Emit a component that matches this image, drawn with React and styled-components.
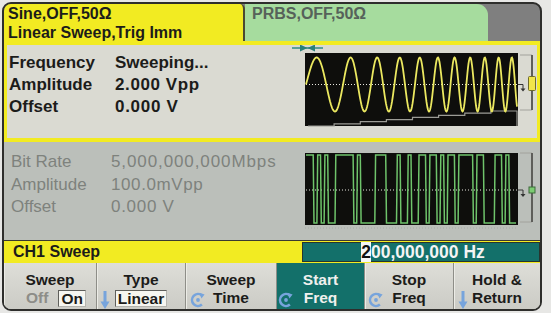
import React from "react";
import styled, { createGlobalStyle } from "styled-components";

const GlobalStyle = createGlobalStyle`
  html, body {
    margin: 0;
    padding: 0;
    background: #e7e7e5;
  }
  body {
    font-family: "Liberation Sans", Arial, sans-serif;
  }
`;

const YELLOW = "#f2eb22";
const TEAL = "#13706a";

const Page = styled.div`
  width: 551px;
  height: 313px;
  padding: 2px 0 0 2px;
  box-sizing: border-box;
`;

const Screen = styled.div`
  width: 540px;
  height: 309px;
  box-sizing: border-box;
  border: 2px solid #2e2e2c;
  border-radius: 9px;
  overflow: hidden;
  display: flex;
  flex-direction: column;
  background: #7f7f7f;
`;

const TabRow = styled.div`
  display: flex;
  height: 37px;
  flex: none;
`;

const Tab = styled.div`
  width: ${(p) => p.$w}px;
  box-sizing: border-box;
  padding: 1px 0 0 ${(p) => p.$pad}px;
  background: ${(p) => (p.$active ? YELLOW : "#a6dc9e")};
  color: ${(p) => (p.$active ? "#1c1c1a" : "#56625a")};
  border-right: ${(p) => (p.$active ? "2px solid #4a4a30" : "none")};
  border-top-right-radius: ${(p) => (p.$active ? 5 : 11)}px;
  font-size: 16px;
  font-weight: bold;
  line-height: 18.5px;
  white-space: nowrap;
`;

const Channel = styled.div`
  height: ${(p) => p.$h}px;
  flex: none;
  box-sizing: border-box;
  display: flex;
  background: ${(p) => (p.$active ? "#dadad2" : "#bbbfba")};
  border: ${(p) => (p.$active ? `solid ${YELLOW}` : "none")};
  border-width: 4px 3px 4px 3px;
`;

const Readout = styled.div`
  flex: 1;
  display: grid;
  grid-template-columns: ${(p) => p.$label}px auto;
  align-content: start;
  padding: ${(p) => p.$top}px 0 0 ${(p) => p.$left}px;
  font-size: 17px;
  line-height: ${(p) => p.$lh}px;
  font-weight: ${(p) => (p.$active ? 700 : 400)};
  color: ${(p) => (p.$active ? "#1c1c1a" : "#7e827d")};
  white-space: nowrap;
`;

const Value = styled.span`
  letter-spacing: ${(p) => p.$ls || 0}px;
`;

const Scope = styled.svg`
  flex: none;
  display: block;
`;

const StatusBar = styled.div`
  display: flex;
  height: 23px;
  flex: none;
  box-sizing: border-box;
  border-top: 1px solid #3a3a30;
  background: ${YELLOW};
`;

const StatusLabel = styled.div`
  width: 298px;
  flex: none;
  box-sizing: border-box;
  padding-left: 9px;
  font-size: 16px;
  font-weight: bold;
  line-height: 22px;
  color: #1c1c1a;
`;

const ValueBox = styled.div`
  flex: 1;
  margin: 1px 0;
  box-sizing: border-box;
  border: 1px solid #27352f;
  background: ${TEAL};
  color: #f4f4f4;
  padding-left: 4px;
  text-align: center;
  font-size: 17.5px;
  font-weight: bold;
  line-height: 18px;
`;

const Cursor = styled.span`
  background: #f6f6f6;
  color: #111;
`;

const Softkeys = styled.div`
  flex: 1;
  display: grid;
  grid-template-columns: 92px 89px 91px 88px 89px 1fr;
  background: #cfcfc9;
`;

const Key = styled.div`
  position: relative;
  box-sizing: border-box;
  padding-top: 8px;
  background: ${(p) =>
    p.$selected ? TEAL : "linear-gradient(#dedeD8, #cbcbc5)"};
  color: ${(p) => (p.$selected ? "#f0f0ee" : "#1c1c1a")};
  border-left: ${(p) => (p.$first ? "none" : "1px solid #8e8e88")};
  box-shadow: ${(p) => (p.$selected ? "none" : "inset 1px 0 0 #ececE6")};
  text-align: center;
  font-size: 15.5px;
  font-weight: bold;
  line-height: 18px;
`;

const KeyLine = styled.div`
  display: flex;
  justify-content: center;
  align-items: center;
  gap: 10px;
  height: 18px;
  padding-left: ${(p) => p.$shift || 0}px;
`;

const Dim = styled.span`
  color: #8d8d88;
`;

const Choice = styled.span`
  display: inline-block;
  padding: 0 2px;
  line-height: 15px;
  background: #f6f6f0;
  border: 1px solid #5f5f5b;
  border-right-color: #b4b4ae;
  border-bottom-color: #b4b4ae;
  color: #1c1c1a;
`;

const KeyIcon = styled.svg`
  position: absolute;
  left: ${(p) => p.$left}px;
  bottom: ${(p) => p.$bottom}px;
`;

const cycles = (t) => 0.022 * t + (0.00027 * t * t) / 2;

const sinePath = (() => {
  let d = "";
  for (let t = 0; t <= 211; t += 0.5) {
    const y = 39.5 - 27 * Math.sin(2 * Math.PI * cycles(t));
    d += `${t === 0 ? "M" : " L"}${(16 + t).toFixed(1)} ${y.toFixed(1)}`;
  }
  return d;
})();

const stairPath = (() => {
  const steps = 8;
  const w = (227 - 18) / steps;
  let d = "M18 81";
  for (let i = 0; i < steps; i++) {
    const y = 81 - (15 * i) / (steps - 1);
    d += ` L${(18 + i * w).toFixed(1)} ${y.toFixed(1)} L${(18 + (i + 1) * w).toFixed(1)} ${y.toFixed(1)}`;
  }
  return d + " L227 81";
})();

const prbsPath = (() => {
  let s = 0b1011001;
  const bits = [];
  for (let i = 0; i < 58; i++) {
    const b = ((s >> 6) ^ (s >> 5)) & 1;
    s = ((s << 1) | b) & 0x7f;
    bits.push(b);
  }
  const w = 210 / bits.length;
  const lvl = (b) => (b ? 13 : 81);
  let d = `M16 ${lvl(bits[0])}`;
  bits.forEach((b, i) => {
    const x = 16 + i * w;
    if (i > 0 && b !== bits[i - 1]) d += ` L${(x + 0.8).toFixed(1)} ${lvl(b)}`;
    d += ` L${(x + w).toFixed(1)} ${lvl(b)}`;
  });
  return d;
})();

const Bracket = ({ top, bottom, mid, marker }) => (
  <g>
    <path d={`M230 ${top} H242 M230 ${bottom} H242`} stroke="#a2a29c" strokeWidth="1" />
    <path d={`M242 ${top} V${bottom}`} stroke="#5e5e5a" strokeWidth="2" />
    <path d={`M228 ${mid} H233 V${mid + 5}`} stroke="#333" strokeWidth="1" fill="none" />
    <path d={`M230.5 ${mid + 4} H235.5 L233 ${mid + 7} Z`} fill="#333" />
    {marker}
  </g>
);

const SweepScope = () => (
  <Scope width="247" height="93" viewBox="0 0 247 93">
    <path d="M2 3 H33" stroke="#2f8a86" strokeWidth="1.5" />
    <path d="M10 -0.5 L17.5 3 L10 6.5 Z M25 -0.5 L17.5 3 L25 6.5 Z" fill="#2a7f7a" />
    <rect x="15" y="8" width="213" height="73" fill="#0e0e0c" />
    <path d="M16 39.5 H228" stroke="#e8e8e0" strokeWidth="1" strokeDasharray="1 2" />
    <path d={stairPath} stroke="#9c9c96" strokeWidth="1.2" fill="none" />
    <path d={sinePath} stroke="#ebe860" strokeWidth="1.8" fill="none" />
    <Bracket
      top={10}
      bottom={65}
      mid={39.5}
      marker={<rect x="238.5" y="31.5" width="7" height="14" rx="1" fill="#f1e54a" stroke="#6e6a2c" />}
    />
  </Scope>
);

const PrbsScope = () => (
  <Scope width="250" height="98" viewBox="0 0 250 98">
    <rect x="15" y="11" width="213" height="72" fill="#0e0e0c" />
    <path d="M16 48 H228" stroke="#e8e8e0" strokeWidth="1" strokeDasharray="1 2" />
    <path d={prbsPath} stroke="#6fc46b" strokeWidth="1.5" fill="none" />
    <path d="M15 86 H228" stroke="#a8aca6" strokeWidth="1" strokeDasharray="1 2" />
    <Bracket
      top={11}
      bottom={80}
      mid={48}
      marker={<rect x="239" y="45" width="6" height="6" fill="#7ccc72" stroke="#3d6a3a" />}
    />
  </Scope>
);

const KnobIcon = ({ left }) => (
  <KeyIcon $left={left} $bottom={1} width="16" height="16" viewBox="0 0 16 16">
    <path d="M11.9 3.4 A6 6 0 1 0 11.9 12.6" stroke="#77a4dc" strokeWidth="2.6" fill="none" />
    <path d="M9.5 0.8 L14.6 2.4 L11.4 6.4 Z" fill="#77a4dc" />
    <circle cx="8" cy="8" r="1.9" fill="#77a4dc" />
  </KeyIcon>
);

const DownIcon = ({ left }) => (
  <KeyIcon $left={left} $bottom={0} width="10" height="18" viewBox="0 0 10 18">
    <path d="M5 0 V12" stroke="#77a4dc" strokeWidth="3" />
    <path d="M0.5 10.5 H9.5 L5 18 Z" fill="#77a4dc" />
  </KeyIcon>
);

export default function App() {
  return (
    <Page>
      <GlobalStyle />
      <Screen>
        <TabRow>
          <Tab $active $w={241} $pad={4}>
            Sine,OFF,50Ω
            <br />
            Linear Sweep,Trig Imm
          </Tab>
          <Tab $w={243} $pad={7}>
            PRBS,OFF,50Ω
          </Tab>
        </TabRow>

        <Channel $active $h={101}>
          <Readout $active $label={106} $top={7} $left={2} $lh={22}>
            <span>Frequency</span>
            <Value>Sweeping...</Value>
            <span>Amplitude</span>
            <Value $ls={0.6}>2.000 Vpp</Value>
            <span>Offset</span>
            <Value $ls={0.7}>0.000 V</Value>
          </Readout>
          <SweepScope />
        </Channel>

        <Channel $h={98}>
          <Readout $label={100} $top={9} $left={7} $lh={22.5}>
            <span>Bit Rate</span>
            <Value $ls={0.9}>5,000,000,000Mbps</Value>
            <span>Amplitude</span>
            <Value $ls={0.6}>100.0mVpp</Value>
            <span>Offset</span>
            <Value $ls={0.7}>0.000 V</Value>
          </Readout>
          <PrbsScope />
        </Channel>

        <StatusBar>
          <StatusLabel>CH1 Sweep</StatusLabel>
          <ValueBox>
            <Cursor>2</Cursor>00,000,000 Hz
          </ValueBox>
        </StatusBar>

        <Softkeys>
          <Key $first>
            <KeyLine>Sweep</KeyLine>
            <KeyLine $shift={12}>
              <Dim>Off</Dim>
              <Choice>On</Choice>
            </KeyLine>
          </Key>
          <Key>
            <KeyLine>Type</KeyLine>
            <KeyLine>
              <Choice>Linear</Choice>
            </KeyLine>
            <DownIcon left={3} />
          </Key>
          <Key>
            <KeyLine>Sweep</KeyLine>
            <KeyLine>Time</KeyLine>
            <KnobIcon left={4} />
          </Key>
          <Key $selected>
            <KeyLine>Start</KeyLine>
            <KeyLine>Freq</KeyLine>
            <KnobIcon left={1} />
          </Key>
          <Key>
            <KeyLine>Stop</KeyLine>
            <KeyLine>Freq</KeyLine>
            <KnobIcon left={3} />
          </Key>
          <Key>
            <KeyLine>Hold &amp;</KeyLine>
            <KeyLine>Return</KeyLine>
            <DownIcon left={4} />
          </Key>
        </Softkeys>
      </Screen>
    </Page>
  );
}
